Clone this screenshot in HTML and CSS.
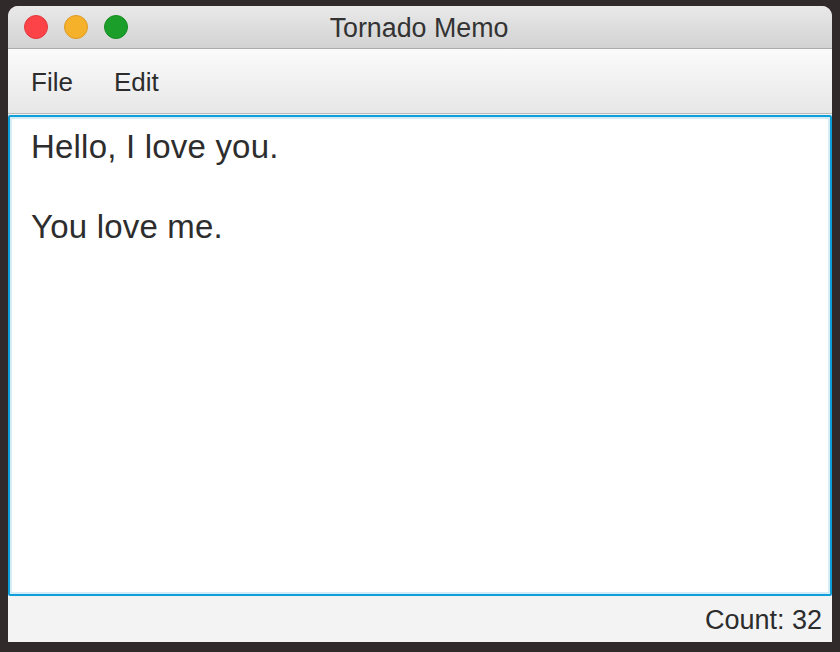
FILE: index.html
```html
<!DOCTYPE html>
<html>
<head>
<meta charset="utf-8">
<link rel="stylesheet" href="styles.css">
</head>
<body>
<div class="window">
  <div class="titlebar">
    <div class="lights">
      <span class="light red"></span>
      <span class="light yellow"></span>
      <span class="light green"></span>
    </div>
    <div class="title">Tornado Memo</div>
  </div>
  <div class="menubar">
    <span class="menu">File</span>
    <span class="menu">Edit</span>
  </div>
  <div class="editor">
    <div class="editor-inner">
      <div class="line">Hello, I love you.</div>
      <div class="line">&nbsp;</div>
      <div class="line">You love me.</div>
    </div>
  </div>
  <div class="statusbar">
    <span class="count">Count: 32</span>
  </div>
</div>
</body>
</html>
```
FILE: styles.css
```css
html, body {
  margin: 0;
  padding: 0;
  height: 100%;
}
body {
  background: #302a2b;
  font-family: "Liberation Sans", Arial, sans-serif;
  color: #2e2e2e;
}
.window {
  margin: 6px 8px 0 8px;
  width: 824px;
  height: 636px;
  border-radius: 10px 10px 0 0;
  overflow: hidden;
  display: flex;
  flex-direction: column;
  background: #f2f2f2;
}
.titlebar {
  position: relative;
  height: 42px;
  flex: none;
  border-bottom: 1px solid #acacac;
  background: linear-gradient(#e9e9e9, #d2d2d2);
  display: flex;
  align-items: center;
  justify-content: center;
}
.lights {
  position: absolute;
  left: 16px;
  top: 9px;
  display: flex;
  gap: 16px;
}
.light {
  width: 22px;
  height: 22px;
  border-radius: 50%;
  border: 1px solid rgba(0,0,0,0.12);
}
.red { background: #fc4448; border-color: #e1383c; }
.yellow { background: #f6b12b; border-color: #dc9a22; }
.green { background: #1c9f2a; border-color: #168a22; }
.title {
  font-size: 26.8px;
  color: #333;
  line-height: 42px;
  padding-top: 2px;
  margin-left: -2px;
}
.menubar {
  height: 65px;
  flex: none;
  border-bottom: 1px solid #b9b9b9;
  background: linear-gradient(#fbfbfb, #e7e7e7);
  display: flex;
  align-items: center;
  padding-left: 23px;
  gap: 41px;
  box-sizing: border-box;
}
.menu {
  font-size: 26px;
  color: #2c2c2c;
  padding-top: 3px;
}
.editor {
  margin-top: 1px;
  flex: none;
  height: 481px;
  box-sizing: border-box;
  border: 2px solid #0e9fd8;
  background: #fff;
  border-radius: 2px;
}
.editor-inner {
  height: 100%;
  box-sizing: border-box;
  border: 2px solid #d3ecf8;
  padding: 8px 19px 7px;
  font-size: 33px;
  letter-spacing: 0.2px;
  line-height: 40px;
  color: #2d2d2d;
}
.statusbar {
  flex: 1;
  display: flex;
  align-items: center;
  justify-content: flex-end;
  padding-right: 10px;
  background: #f3f3f3;
}
.count {
  font-size: 27px;
  color: #2c2c2c;
  padding-top: 2px;
}
```
